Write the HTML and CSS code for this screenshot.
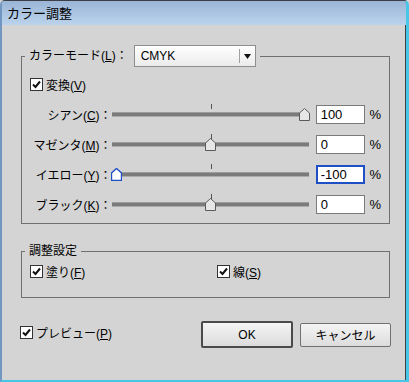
FILE: index.html
```html
<!DOCTYPE html>
<html lang="ja">
<head>
    <meta charset="UTF-8">
    <title>カラー調整</title>
    <link rel="stylesheet" href="styles.css">
</head>
<body>
    <div class="window">
        <div class="titlebar">カラー調整</div>

        <div class="body">
            <fieldset class="group mode-group">
                <legend class="mode-legend">
                    <span>カラーモード(<u>L</u>)：</span>
                    <span class="select">
                        <span class="select-value">CMYK</span>
                        <span class="select-arrow">
                            <svg width="7" height="5" viewBox="0 0 7 5"><path d="M0 0 H7 L3.5 5 Z" fill="#111"/></svg>
                        </span>
                    </span>
                </legend>

                <label class="check convert">
                    <svg class="box" width="13" height="13" viewBox="0 0 13 13"><rect x="0.5" y="0.5" width="12" height="12" fill="#fff" stroke="#333"/><path d="M3 6.5 L5.5 9 L10 3.5" fill="none" stroke="#111" stroke-width="2"/></svg>
                    <span>変換(<u>V</u>)</span>
                </label>

                <div class="slider-row">
                    <span class="slider-label">シアン(<u>C</u>)：</span>
                    <div class="slider">
                        <div class="track"></div>
                        <div class="tick"></div>
                        <svg class="thumb" style="--pos: 1" width="11" height="13" viewBox="0 0 11 13"><path d="M5.5 0.5 L10.5 5 V12.5 H0.5 V5 Z" fill="#e6e6e6" stroke="#5a5a5a"/></svg>
                    </div>
                    <div class="num">100</div>
                    <span class="pct">%</span>
                </div>

                <div class="slider-row">
                    <span class="slider-label">マゼンタ(<u>M</u>)：</span>
                    <div class="slider">
                        <div class="track"></div>
                        <div class="tick"></div>
                        <svg class="thumb" style="--pos: 0.5" width="11" height="13" viewBox="0 0 11 13"><path d="M5.5 0.5 L10.5 5 V12.5 H0.5 V5 Z" fill="#e6e6e6" stroke="#5a5a5a"/></svg>
                    </div>
                    <div class="num">0</div>
                    <span class="pct">%</span>
                </div>

                <div class="slider-row">
                    <span class="slider-label">イエロー(<u>Y</u>)：</span>
                    <div class="slider">
                        <div class="track"></div>
                        <div class="tick"></div>
                        <svg class="thumb active" style="--pos: 0" width="11" height="13" viewBox="0 0 11 13"><path d="M5.5 0.5 L10.5 5 V12.5 H0.5 V5 Z" fill="#fff" stroke="#1f4fc6" stroke-width="1.4"/></svg>
                    </div>
                    <div class="num focus">-100</div>
                    <span class="pct">%</span>
                </div>

                <div class="slider-row">
                    <span class="slider-label">ブラック(<u>K</u>)：</span>
                    <div class="slider">
                        <div class="track"></div>
                        <div class="tick"></div>
                        <svg class="thumb" style="--pos: 0.5" width="11" height="13" viewBox="0 0 11 13"><path d="M5.5 0.5 L10.5 5 V12.5 H0.5 V5 Z" fill="#e6e6e6" stroke="#5a5a5a"/></svg>
                    </div>
                    <div class="num">0</div>
                    <span class="pct">%</span>
                </div>
            </fieldset>

            <fieldset class="group adjust-group">
                <legend>調整設定</legend>
                <div class="check-grid">
                    <label class="check">
                        <svg class="box" width="13" height="13" viewBox="0 0 13 13"><rect x="0.5" y="0.5" width="12" height="12" fill="#fff" stroke="#333"/><path d="M3 6.5 L5.5 9 L10 3.5" fill="none" stroke="#111" stroke-width="2"/></svg>
                        <span>塗り(<u>F</u>)</span>
                    </label>
                    <label class="check">
                        <svg class="box" width="13" height="13" viewBox="0 0 13 13"><rect x="0.5" y="0.5" width="12" height="12" fill="#fff" stroke="#333"/><path d="M3 6.5 L5.5 9 L10 3.5" fill="none" stroke="#111" stroke-width="2"/></svg>
                        <span>線(<u>S</u>)</span>
                    </label>
                </div>
            </fieldset>

            <div class="footer">
                <label class="check preview">
                    <svg class="box" width="13" height="13" viewBox="0 0 13 13"><rect x="0.5" y="0.5" width="12" height="12" fill="#fff" stroke="#333"/><path d="M3 6.5 L5.5 9 L10 3.5" fill="none" stroke="#111" stroke-width="2"/></svg>
                    <span>プレビュー(<u>P</u>)</span>
                </label>
                <button class="btn default">OK</button>
                <button class="btn">キャンセル</button>
            </div>
        </div>
    </div>
</body>
</html>
```

FILE: styles.css
```css
* {
    margin: 0;
    padding: 0;
    box-sizing: border-box;
}

body {
    font-family: "Liberation Sans", "Noto Sans CJK JP", sans-serif;
    font-size: 12px;
    color: #000;
    background: #d4d4d4;
}

.window {
    width: 409px;
    height: 382px;
    background: #d4d4d4;
    border-style: solid;
    border-width: 1px 3px 2px 2px;
    border-color: #3b3f46 #47c6e6 #47c6e6 #7196c2;
    border-radius: 5px 5px 0 0;
    box-shadow: inset -1px 0 0 #3b3f46;
    overflow: hidden;
}

.titlebar {
    height: 24px;
    line-height: 24px;
    padding-left: 5px;
    font-family: "Noto Sans CJK JP", sans-serif;
    font-size: 13px;
    background: linear-gradient(#9ab5d6, #bbd3ec);
}

.body {
    padding: 20px 16px 0 19px;
}

.group {
    border: 1px solid #707070;
    min-width: 0;
}

.group legend {
    padding: 0 4px;
    margin-left: -5px;
    line-height: 16px;
}

.mode-group {
    padding: 9px 8px 4px 8px;
}

.mode-group .mode-legend {
    display: flex;
    align-items: center;
    gap: 6px;
}

.select {
    width: 122px;
    height: 22px;
    display: flex;
    align-items: center;
    padding-left: 6px;
    border: 1px solid #8e8e8e;
    background: linear-gradient(#ffffff, #ebebeb);
}

.select-value {
    flex: 1;
    font-size: 12px;
}

.select-arrow {
    width: 16px;
    height: 14px;
    display: flex;
    align-items: center;
    justify-content: center;
    border-left: 1px solid #a0a0a0;
}

.check {
    display: flex;
    align-items: center;
    gap: 3px;
    height: 16px;
    white-space: nowrap;
}

.convert {
    margin-bottom: 7px;
}

.slider-row {
    display: flex;
    align-items: center;
    height: 30px;
}

.slider-label {
    width: 82px;
    text-align: right;
    white-space: nowrap;
}

.slider {
    position: relative;
    width: 198px;
    height: 30px;
    display: flex;
    align-items: center;
}

.track {
    width: 100%;
    height: 3px;
    background: #7b7b7b;
    box-shadow: 0 1px 0 #ababab, 0 -1px 0 #9c9c9c;
}

.tick {
    position: absolute;
    left: 99px;
    top: 5px;
    width: 1px;
    height: 5px;
    background: #555;
}

.thumb {
    position: absolute;
    top: 9px;
    left: calc(var(--pos) * (100% - 9px) - 1px);
}

.num {
    width: 50px;
    height: 19px;
    margin-left: 7px;
    padding-left: 4px;
    line-height: 17px;
    font-size: 13px;
    background: #fff;
    border: 1px solid #7a7a7a;
}

.num.focus {
    border-color: #1f4fc6;
    box-shadow: inset 0 0 0 1px #1f4fc6;
}

.pct {
    margin-left: 4px;
    font-size: 13px;
}

.adjust-group {
    margin-top: 19px;
    padding: 4px 8px 18px 8px;
}

.check-grid {
    display: grid;
    grid-template-columns: 187px auto;
}

.footer {
    display: flex;
    align-items: center;
    margin: 23px -1px 0 -1px;
}

.preview {
    margin-top: -5px;
}

.btn {
    font: inherit;
    width: 91px;
    height: 24px;
    border: 1px solid #707070;
    border-radius: 2px;
    background: linear-gradient(#f4f4f4, #dcdcdc);
    color: #000;
}

.btn.default {
    width: 92px;
    height: 27px;
    margin-left: auto;
    margin-right: 7px;
    border: 2px solid #4a4a4a;
}
```
